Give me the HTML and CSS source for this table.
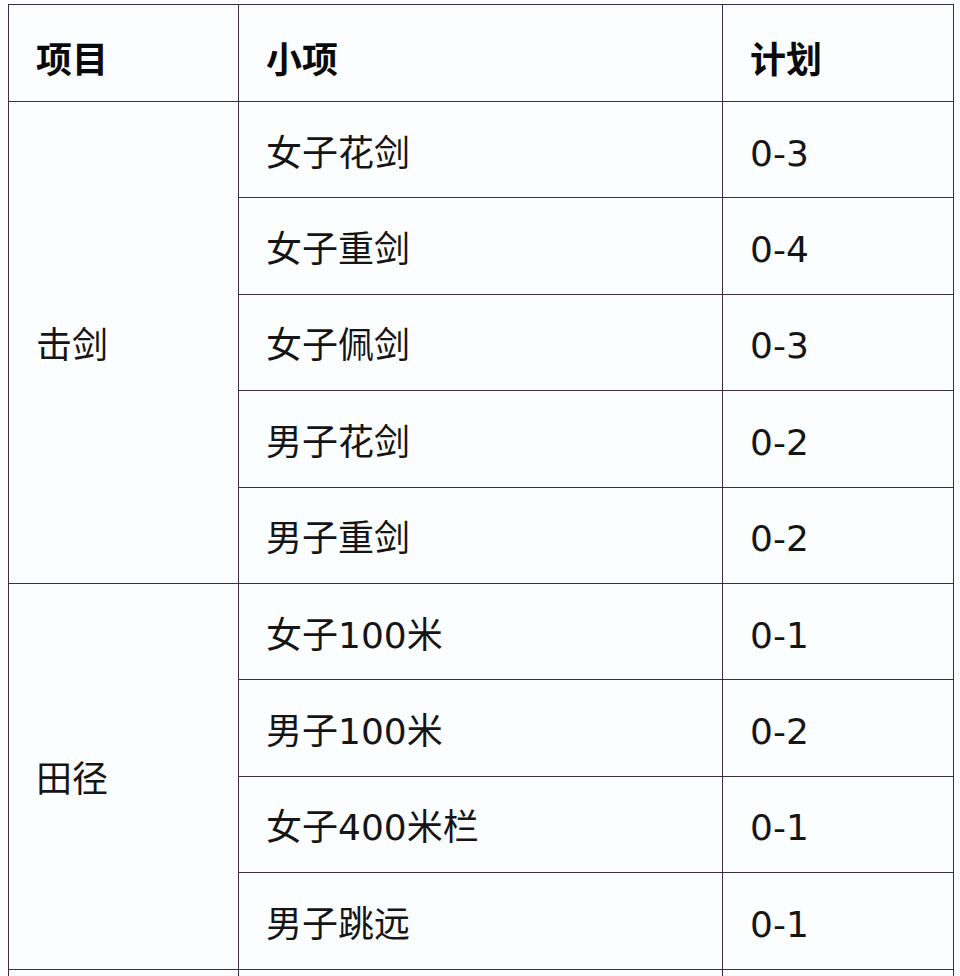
FILE: index.html
```html
<!DOCTYPE html>
<html lang="zh">
<head>
<meta charset="utf-8">
<link rel="stylesheet" href="styles.css">
</head>
<body>
<table class="plan">
  <colgroup>
    <col class="c1"><col class="c2"><col class="c3">
  </colgroup>
  <thead>
    <tr class="head"><th>项目</th><th>小项</th><th>计划</th></tr>
  </thead>
  <tbody>
    <tr><td rowspan="5">击剑</td><td>女子花剑</td><td>0-3</td></tr>
    <tr><td>女子重剑</td><td>0-4</td></tr>
    <tr><td>女子佩剑</td><td>0-3</td></tr>
    <tr><td>男子花剑</td><td>0-2</td></tr>
    <tr><td>男子重剑</td><td>0-2</td></tr>
    <tr><td rowspan="4">田径</td><td>女子100米</td><td>0-1</td></tr>
    <tr><td>男子100米</td><td>0-2</td></tr>
    <tr><td>女子400米栏</td><td>0-1</td></tr>
    <tr><td>男子跳远</td><td>0-1</td></tr>
    <tr><td>&nbsp;</td><td>&nbsp;</td><td>&nbsp;</td></tr>
  </tbody>
</table>
</body>
</html>
```
FILE: styles.css
```css
html, body {
  margin: 0;
  padding: 0;
  background: #fcfdff;
  overflow: hidden;
  height: 976px;
}
body {
  padding: 4px 0 0 8px;
  box-sizing: border-box;
  font-family: "DejaVu Sans", "Noto Sans CJK SC", sans-serif;
  color: #151515;
}
.plan {
  border-collapse: collapse;
  table-layout: fixed;
  width: 945px;
}
.c1 { width: 230px; }
.c2 { width: 484px; }
.c3 { width: 231px; }
.plan th, .plan td {
  border: 1.5px solid #3a2e4b;
  padding: 8px 0 0 27px;
  text-align: left;
  font-size: 36px;
  line-height: 40px;
  box-sizing: border-box;
  white-space: nowrap;
}
.plan td {
  height: 96.4px;
  font-family: "DejaVu Sans", "Noto Sans CJK SC", sans-serif;
}
.plan th {
  font-family: "Noto Sans CJK SC", sans-serif;
  font-weight: 700;
  color: #0a0a0a;
  height: 97px;
}
```
